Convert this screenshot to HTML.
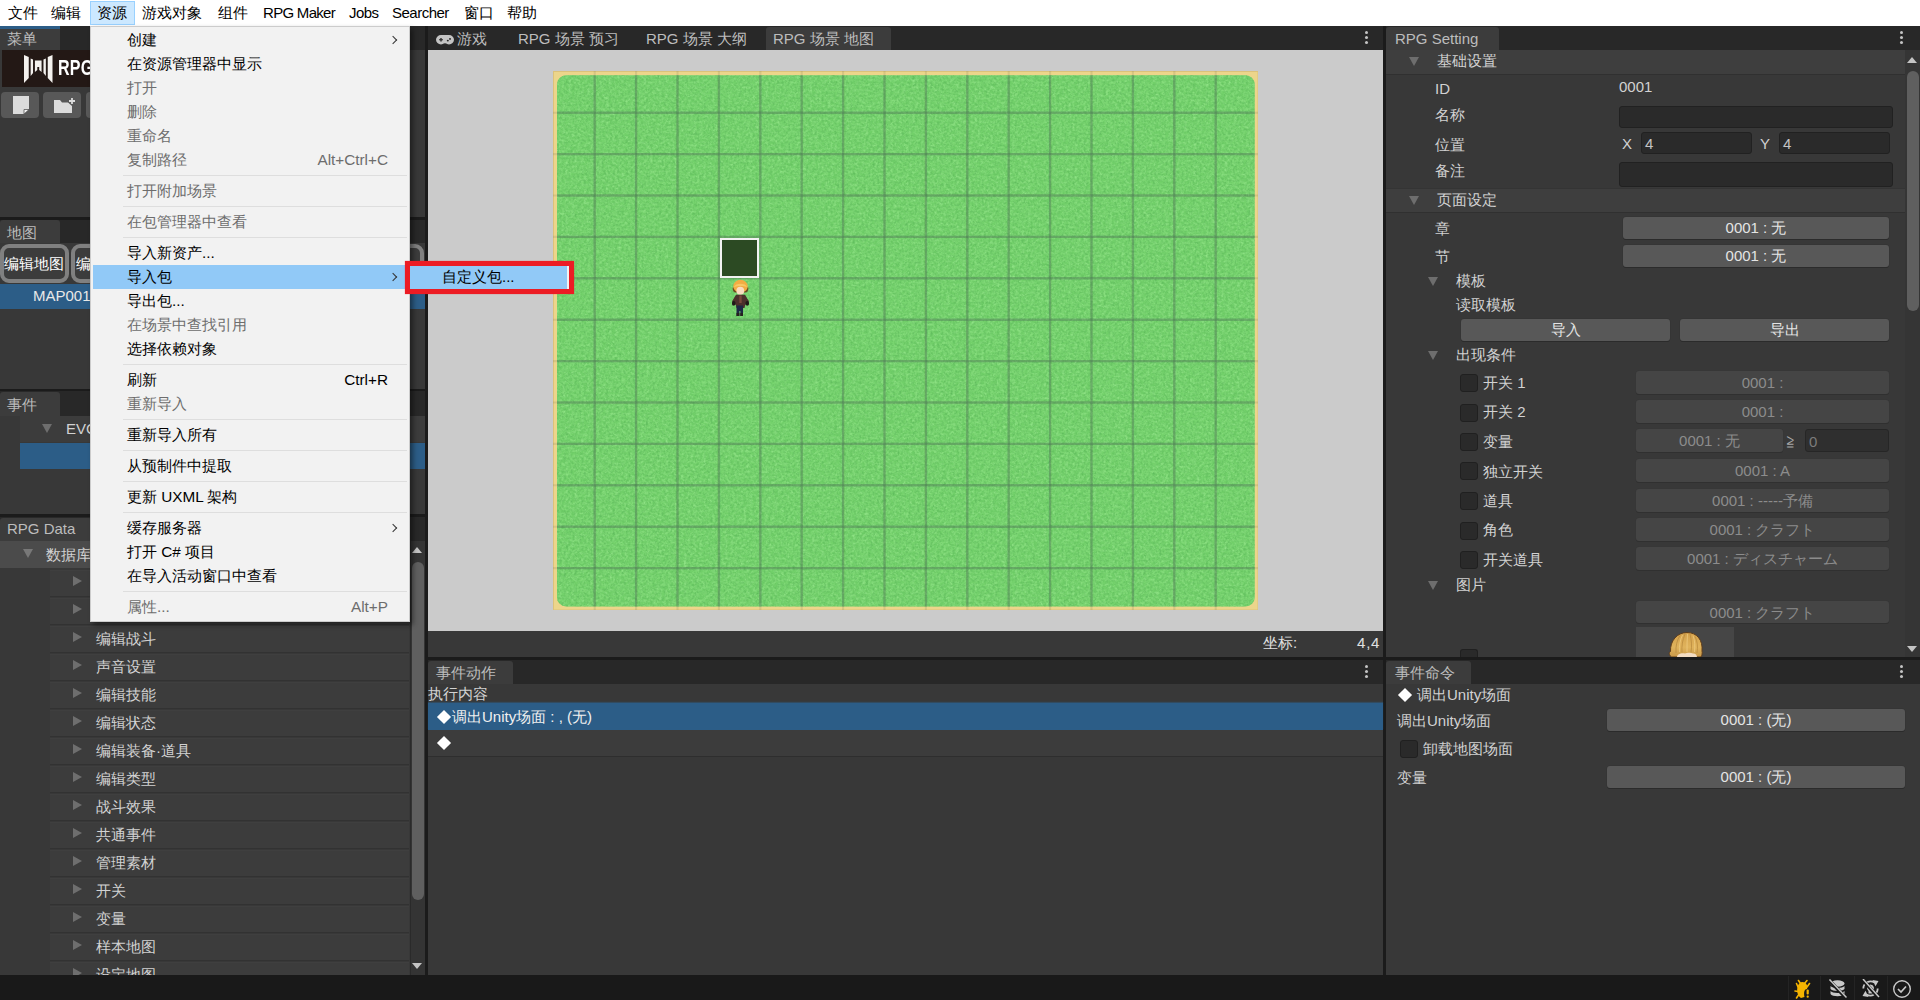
<!DOCTYPE html>
<html lang="zh">
<head>
<meta charset="utf-8">
<title>RPG Maker Unite</title>
<style>
*{box-sizing:border-box;margin:0;padding:0}
html,body{width:1920px;height:1000px;overflow:hidden;background:#383838}
body{font-family:"Liberation Sans",sans-serif;font-size:15px;color:#d2d2d2;position:relative;line-height:1}
.a{position:absolute}
.t{position:absolute;white-space:nowrap;line-height:20px;height:20px}
/* menubar */
#mbar{left:0;top:0;width:1920px;height:26px;background:#fff}
#mbar .t{color:#000;top:3px;font-size:15.400px}
#mbar .l{font-size:15px}
#mact{left:90px;top:1px;width:45px;height:24px;background:#cce8ff;border:1px solid #99d1ff}
/* unity generic */
.strip{background:#282828}
.tab{background:#3c3c3c;border-radius:3px 3px 0 0}
.tabt{color:#bdbdbd}
.split{background:#1b1b1b}
.sel{background:#2c5d87}
.fld{background:#2a2a2a;border:1px solid #212121;border-radius:3px}
.btn{background:#585858;border-radius:3px;box-shadow:0 1px 0 #2b2b2b,0 0 0 0.5px #333;color:#e4e4e4;text-align:center;line-height:22px}
.btnd{background:#454545;border-radius:3px;box-shadow:0 1px 0 #303030,0 0 0 0.5px #363636;color:#8c8c8c;text-align:center;line-height:23px}
.chk{background:#2a2a2a;border:1px solid #202020;border-radius:3px;width:18px;height:18px}
.tri-d{width:0;height:0;border-left:5px solid transparent;border-right:5px solid transparent;border-top:9px solid #6e6e6e}
.tri-r{width:0;height:0;border-top:5px solid transparent;border-bottom:5px solid transparent;border-left:9px solid #6e6e6e}
.row{background:#3c3c3c;left:50px;width:359px;height:27px;border-bottom:1px solid #323232;border-top:1px solid #3f3f3f}
.kebab{width:3px;height:3px;border-radius:50%;background:#c4c4c4;box-shadow:0 5px 0 #c4c4c4,0 10px 0 #c4c4c4}
.mb{top:244px;width:69px;height:39px;border:4px solid #808080;border-radius:9px;background:#3c3c3c}
/* windows menu */
#menu{left:90px;top:26px;width:320px;height:596px;background:#f2f2f2;border:1px solid #ccc;box-shadow:3px 3px 5px rgba(0,0,0,.45)}
#menu .t{color:#000;left:36px;font-size:15.300px}
#menu .d{color:#6d6d6d}
#menu .k{left:auto;right:21px}
#menu .sep{position:absolute;left:32px;right:2px;height:1px;background:#dedede}
.chev{position:absolute;width:6px;height:6px;border-top:1.5px solid #333;border-right:1.5px solid #333;transform:rotate(45deg)}
</style>
</head>
<body>

<!-- ===== base panels ===== -->
<div class="a" style="left:0;top:26px;width:1920px;height:949px;background:#383838"></div>
<!-- vertical splitters -->
<div class="a split" style="left:425px;top:26px;width:3px;height:949px"></div>
<div class="a split" style="left:1383px;top:26px;width:3px;height:949px"></div>
<!-- status bar -->
<div class="a" style="left:0;top:975px;width:1920px;height:25px;background:#191919"></div>

<!-- ===== LEFT COLUMN ===== -->
<div id="left">
<!-- menu panel -->
<div class="a strip" style="left:0;top:26px;width:425px;height:24px"></div>
<div class="a tab" style="left:0;top:26px;width:60px;height:24px;border-top:3px solid #2c5d87;border-radius:0"></div>
<div class="t tabt" style="left:7px;top:29px">菜单</div>
<div class="a" style="left:2px;top:50px;width:406px;height:37px;background:#231815"></div>
<!-- logo -->
<svg class="a" style="left:24px;top:55px" width="28.500" height="28" viewBox="0 0 30 28" preserveAspectRatio="none">
<path d="M0 0 L5 2 L5 23 L0 28 Z M7 3.5 L9.5 4.5 L9.5 18 L7 21 Z M11.5 5.5 L18.5 5.5 L18.5 17 L16 15 L16 12 L14 12 L14 15 L11.5 17 Z M20.5 4.5 L23 3.5 L23 21 L20.5 18 Z M25 2 L30 0 L30 28 L25 23 Z" fill="#f4f1ee"/>
</svg>
<div class="t" style="left:58px;top:56px;font-size:22px;font-weight:bold;color:#fff;line-height:24px;height:24px;transform:scaleX(0.73);transform-origin:left center;letter-spacing:0.3px">RPG MAKER</div>
<!-- tool buttons -->
<div class="a" style="left:1px;top:92px;width:38px;height:26px;background:#585858;border-radius:4px"></div>
<div class="a" style="left:43px;top:92px;width:38px;height:26px;background:#585858;border-radius:4px"></div>
<div class="a" style="left:86px;top:92px;width:38px;height:26px;background:#585858;border-radius:4px"></div>
<svg class="a" style="left:13px;top:96px" width="17" height="19" viewBox="0 0 17 19"><path d="M0 0H16V13L11 18H0Z" fill="#dcdcdc"/><path d="M11 18V13.5H16Z" fill="#f4f4f4" stroke="#585858" stroke-width="0.8"/></svg>
<svg class="a" style="left:54px;top:98px" width="22" height="16" viewBox="0 0 22 16"><path d="M0 2H6L8 4.5H14L18 8V15H0Z" fill="#dcdcdc"/><path d="M18 0V6M15 3H21" stroke="#dcdcdc" stroke-width="1.8"/></svg>

<!-- map panel -->
<div class="a split" style="left:0;top:217px;width:425px;height:3px"></div>
<div class="a strip" style="left:0;top:220px;width:425px;height:23px"></div>
<div class="a tab" style="left:0;top:220px;width:60px;height:23px"></div>
<div class="t tabt" style="left:7px;top:223px">地图</div>
<div class="a" style="left:0;top:243px;width:425px;height:41px;background:#383838"></div>
<div class="a mb" style="left:0"></div><div class="t" style="left:4px;top:254px;color:#fff;font-size:14.700px">编辑地图</div>
<div class="a mb" style="left:71px"></div><div class="t" style="left:76px;top:254px;color:#fff;font-size:14.700px">编辑</div>
<div class="a mb" style="left:355px"></div>
<div class="a sel" style="left:0;top:284px;width:425px;height:25px"></div>
<div class="t" style="left:33px;top:286px;color:#e8e8e8">MAP001</div>

<!-- event panel -->
<div class="a split" style="left:0;top:389px;width:425px;height:3px"></div>
<div class="a strip" style="left:0;top:391px;width:425px;height:25px"></div>
<div class="a tab" style="left:0;top:392px;width:60px;height:24px"></div>
<div class="t tabt" style="left:7px;top:395px">事件</div>
<div class="a" style="left:20px;top:416px;width:405px;height:26px;background:#3c3c3c"></div>
<div class="a tri-d" style="left:42px;top:424px"></div>
<div class="t" style="left:66px;top:419px">EVC</div>
<div class="a sel" style="left:20px;top:443px;width:405px;height:26px"></div>

<!-- rpg data panel -->
<div class="a split" style="left:0;top:514px;width:425px;height:3px"></div>
<div class="a strip" style="left:0;top:517px;width:425px;height:24px"></div>
<div class="a tab" style="left:0;top:518px;width:92px;height:23px"></div>
<div class="t tabt" style="left:7px;top:519px">RPG Data</div>
<div class="a" style="left:0;top:541px;width:410px;height:27px;background:#4b4b4b"></div>
<div class="a tri-d" style="left:23px;top:549px;border-top-color:#787878"></div>
<div class="t" style="left:46px;top:545px">数据库</div>
<div class="a row" style="top:570px"></div><div class="a tri-r" style="left:73px;top:576px"></div>
<div class="a row" style="top:598px"></div><div class="a tri-r" style="left:73px;top:604px"></div>
<div class="a row" style="top:626px"></div><div class="a tri-r" style="left:73px;top:632px"></div><div class="t" style="left:96px;top:629px">编辑战斗</div>
<div class="a row" style="top:654px"></div><div class="a tri-r" style="left:73px;top:660px"></div><div class="t" style="left:96px;top:657px">声音设置</div>
<div class="a row" style="top:682px"></div><div class="a tri-r" style="left:73px;top:688px"></div><div class="t" style="left:96px;top:685px">编辑技能</div>
<div class="a row" style="top:710px"></div><div class="a tri-r" style="left:73px;top:716px"></div><div class="t" style="left:96px;top:713px">编辑状态</div>
<div class="a row" style="top:738px"></div><div class="a tri-r" style="left:73px;top:744px"></div><div class="t" style="left:96px;top:741px">编辑装备·道具</div>
<div class="a row" style="top:766px"></div><div class="a tri-r" style="left:73px;top:772px"></div><div class="t" style="left:96px;top:769px">编辑类型</div>
<div class="a row" style="top:794px"></div><div class="a tri-r" style="left:73px;top:800px"></div><div class="t" style="left:96px;top:797px">战斗效果</div>
<div class="a row" style="top:822px"></div><div class="a tri-r" style="left:73px;top:828px"></div><div class="t" style="left:96px;top:825px">共通事件</div>
<div class="a row" style="top:850px"></div><div class="a tri-r" style="left:73px;top:856px"></div><div class="t" style="left:96px;top:853px">管理素材</div>
<div class="a row" style="top:878px"></div><div class="a tri-r" style="left:73px;top:884px"></div><div class="t" style="left:96px;top:881px">开关</div>
<div class="a row" style="top:906px"></div><div class="a tri-r" style="left:73px;top:912px"></div><div class="t" style="left:96px;top:909px">变量</div>
<div class="a row" style="top:934px"></div><div class="a tri-r" style="left:73px;top:940px"></div><div class="t" style="left:96px;top:937px">样本地图</div>
<div class="a row" style="top:962px"></div><div class="a tri-r" style="left:73px;top:968px"></div><div class="t" style="left:96px;top:965px">设定地图</div>

<!-- scrollbar -->
<div class="a" style="left:410px;top:541px;width:15px;height:434px;background:#343434;border-left:1px solid #2a2a2a"></div>
<div class="a" style="left:412px;top:547px;width:0;height:0;border-left:5px solid transparent;border-right:5px solid transparent;border-bottom:6px solid #c4c4c4"></div>
<div class="a" style="left:412px;top:963px;width:0;height:0;border-left:5px solid transparent;border-right:5px solid transparent;border-top:6px solid #c4c4c4"></div>
<div class="a" style="left:412px;top:562px;width:12px;height:338px;background:#5f5f5f;border-radius:6px"></div>
</div>


<!-- ===== CENTER COLUMN ===== -->
<div id="center">
<div class="a strip" style="left:428px;top:26px;width:955px;height:24px"></div>
<div class="a tab" style="left:766px;top:27px;width:125px;height:23px"></div>
<svg class="a" style="left:436px;top:35px" width="18" height="9.500" viewBox="0 0 18 11" preserveAspectRatio="none"><path d="M5 0H13A5 5.5 0 0 1 13 11C11.5 11 11 9.5 9 9.5C7 9.5 6.5 11 5 11A5 5.500 0 0 1 5 0Z" fill="#c4c4c4"/><path d="M3 5.500H7M5 3.500V7.500" stroke="#282828" stroke-width="1.4"/><circle cx="11.800" cy="6.500" r="1" fill="#282828"/><circle cx="14" cy="4.500" r="1" fill="#282828"/></svg>
<div class="t tabt" style="left:457px;top:29px">游戏</div>
<div class="t tabt" style="left:518px;top:29px">RPG 场景 预习</div>
<div class="t tabt" style="left:646px;top:29px">RPG 场景 大纲</div>
<div class="t tabt" style="left:773px;top:29px">RPG 场景 地图</div>
<div class="a kebab" style="left:1365px;top:31px"></div>
<!-- scene view -->
<div class="a" style="left:428px;top:50px;width:955px;height:581px;background:#cbcbcb"></div>
<svg class="a" style="left:552.500px;top:70.500px" width="705.5" height="539.5" viewBox="0 0 705.5 539.5">
<defs>
<filter id="gn" x="0" y="0" width="100%" height="100%" color-interpolation-filters="sRGB"><feTurbulence type="fractalNoise" baseFrequency="0.32 0.38" numOctaves="3" seed="7" result="n"/><feColorMatrix in="n" type="matrix" values="0 0 0 0 0.58  0 0 0 0 0.90  0 0 0 0 0.54  1.1 1.1 0 0 -0.86"/><feComposite operator="in" in2="SourceGraphic"/></filter>
<filter id="gd" x="0" y="0" width="100%" height="100%" color-interpolation-filters="sRGB"><feTurbulence type="fractalNoise" baseFrequency="0.45" numOctaves="2" seed="21" result="n"/><feColorMatrix in="n" type="matrix" values="0 0 0 0 0.34  0 0 0 0 0.70  0 0 0 0 0.34  0 0.9 0.9 0 -0.78"/><feComposite operator="in" in2="SourceGraphic"/></filter>
<filter id="bl" x="-5%" y="-5%" width="110%" height="110%"><feGaussianBlur stdDeviation="0.55"/></filter>
<filter id="bl2" x="-5%" y="-5%" width="110%" height="110%"><feGaussianBlur stdDeviation="0.6"/></filter>
</defs>
<rect x="0" y="0" width="705.5" height="539.5" fill="#ecd58b"/>
<rect x="0.500" y="0.500" width="704.5" height="538.5" fill="none" stroke="#dcc27a" stroke-width="1"/>
<g filter="url(#bl)">
<rect x="4" y="4.300" width="697.7" height="531.2" rx="9" ry="9" fill="#72d06b"/>
</g>
<rect x="4" y="4.300" width="697.7" height="531.2" rx="9" ry="9" fill="#fff" filter="url(#gn)"/>
<rect x="4" y="4.300" width="697.7" height="531.2" rx="9" ry="9" fill="#fff" filter="url(#gd)"/>
<clipPath id="gc"><rect x="4" y="4.300" width="697.7" height="531.2" rx="9" ry="9"/></clipPath>
<g stroke="#6b6b4a" stroke-opacity="0.16" stroke-width="2.100" filter="url(#bl)">
<line x1="41.7" y1="0" x2="41.7" y2="539.5"/><line x1="83.1" y1="0" x2="83.1" y2="539.5"/><line x1="124.5" y1="0" x2="124.5" y2="539.5"/><line x1="165.9" y1="0" x2="165.9" y2="539.5"/><line x1="207.3" y1="0" x2="207.3" y2="539.5"/><line x1="248.7" y1="0" x2="248.7" y2="539.5"/><line x1="290.1" y1="0" x2="290.1" y2="539.5"/><line x1="331.5" y1="0" x2="331.5" y2="539.5"/><line x1="372.9" y1="0" x2="372.9" y2="539.5"/><line x1="414.3" y1="0" x2="414.3" y2="539.5"/><line x1="455.7" y1="0" x2="455.7" y2="539.5"/><line x1="497.1" y1="0" x2="497.1" y2="539.5"/><line x1="538.5" y1="0" x2="538.5" y2="539.5"/><line x1="579.9" y1="0" x2="579.9" y2="539.5"/><line x1="621.3" y1="0" x2="621.3" y2="539.5"/><line x1="662.7" y1="0" x2="662.7" y2="539.5"/><line x1="0" y1="41.7" x2="705.5" y2="41.7"/><line x1="0" y1="83.1" x2="705.5" y2="83.1"/><line x1="0" y1="124.5" x2="705.5" y2="124.5"/><line x1="0" y1="165.9" x2="705.5" y2="165.9"/><line x1="0" y1="207.3" x2="705.5" y2="207.3"/><line x1="0" y1="248.7" x2="705.5" y2="248.7"/><line x1="0" y1="290.1" x2="705.5" y2="290.1"/><line x1="0" y1="331.5" x2="705.5" y2="331.5"/><line x1="0" y1="372.9" x2="705.5" y2="372.9"/><line x1="0" y1="414.3" x2="705.5" y2="414.3"/><line x1="0" y1="455.7" x2="705.5" y2="455.7"/><line x1="0" y1="497.1" x2="705.5" y2="497.1"/>
</g>
<g clip-path="url(#gc)"><g stroke="#4a7d5a" stroke-opacity="0.36" stroke-width="2.400" filter="url(#bl2)">
<line x1="41.7" y1="0" x2="41.7" y2="539.5"/><line x1="83.1" y1="0" x2="83.1" y2="539.5"/><line x1="124.5" y1="0" x2="124.5" y2="539.5"/><line x1="165.9" y1="0" x2="165.9" y2="539.5"/><line x1="207.3" y1="0" x2="207.3" y2="539.5"/><line x1="248.7" y1="0" x2="248.7" y2="539.5"/><line x1="290.1" y1="0" x2="290.1" y2="539.5"/><line x1="331.5" y1="0" x2="331.5" y2="539.5"/><line x1="372.9" y1="0" x2="372.9" y2="539.5"/><line x1="414.3" y1="0" x2="414.3" y2="539.5"/><line x1="455.7" y1="0" x2="455.7" y2="539.5"/><line x1="497.1" y1="0" x2="497.1" y2="539.5"/><line x1="538.5" y1="0" x2="538.5" y2="539.5"/><line x1="579.9" y1="0" x2="579.9" y2="539.5"/><line x1="621.3" y1="0" x2="621.3" y2="539.5"/><line x1="662.7" y1="0" x2="662.7" y2="539.5"/><line x1="0" y1="41.7" x2="705.5" y2="41.7"/><line x1="0" y1="83.1" x2="705.5" y2="83.1"/><line x1="0" y1="124.5" x2="705.5" y2="124.5"/><line x1="0" y1="165.9" x2="705.5" y2="165.9"/><line x1="0" y1="207.3" x2="705.5" y2="207.3"/><line x1="0" y1="248.7" x2="705.5" y2="248.7"/><line x1="0" y1="290.1" x2="705.5" y2="290.1"/><line x1="0" y1="331.5" x2="705.5" y2="331.5"/><line x1="0" y1="372.9" x2="705.5" y2="372.9"/><line x1="0" y1="414.3" x2="705.5" y2="414.3"/><line x1="0" y1="455.7" x2="705.5" y2="455.7"/><line x1="0" y1="497.1" x2="705.5" y2="497.1"/>
</g></g>
</svg>
<!-- selected cell -->
<div class="a" style="left:720px;top:237.500px;width:39px;height:40px;background:#2c4a23;border:2.500px solid #f2f2f2"></div>
<!-- character -->
<svg class="a" style="left:731px;top:279px" width="19" height="38" viewBox="0 0 19 38">
<path d="M1.600 8.500C1.600 13 3.500 13.500 4.500 13.500L14.500 13.500C15.500 13.500 17.400 13 17.400 8.500Z" fill="#6b4a22"/>
<ellipse cx="9.500" cy="7.200" rx="7.200" ry="6.400" fill="#f3ad43"/>
<ellipse cx="9.300" cy="11.800" rx="3.900" ry="4" fill="#f8dcc0"/>
<path d="M3 8C4 3.500 15 3.500 16 8C13 6.500 6 6.500 3 8Z" fill="#f8c765"/>
<path d="M5 15.800H14L17.800 22L16.500 26.500L14.300 25.500L13.500 29H5.500L4.700 25.500L2.500 26.500L1.200 22Z" fill="#4b302c"/>
<rect x="1" y="22" width="3.400" height="4.600" rx="1.600" fill="#1e1a18"/><rect x="14.600" y="22" width="3.400" height="4.600" rx="1.600" fill="#1e1a18"/>
<path d="M8.300 16.500H10.700V24H8.300Z" fill="#7a4a3c"/>
<path d="M5.500 26.500H12V37H9.400V32H8.400V37H5.500Z" fill="#1d2944"/>
<rect x="5.500" y="34" width="2.800" height="3" fill="#26211e"/><rect x="9.300" y="34" width="2.700" height="3" fill="#26211e"/>
</svg>
<!-- coord bar -->
<div class="a" style="left:428px;top:631px;width:955px;height:26px;background:#383838"></div>
<div class="t" style="left:1263px;top:633px;color:#e0e0e0">坐标:</div>
<div class="t" style="left:1357px;top:633px;color:#e0e0e0;letter-spacing:0.8px">4,4</div>
<!-- event action panel -->
<div class="a split" style="left:425px;top:657px;width:1495px;height:3px"></div>
<div class="a strip" style="left:428px;top:660px;width:955px;height:24px"></div>
<div class="a tab" style="left:428px;top:661px;width:85px;height:23px"></div>
<div class="t tabt" style="left:436px;top:663px">事件动作</div>
<div class="a kebab" style="left:1365px;top:665px"></div>
<div class="t" style="left:428px;top:684px">执行内容</div>
<div class="a sel" style="left:428px;top:703px;width:955px;height:27px;box-shadow:0 -1px 1px rgba(44,93,135,.5)"></div>
<div class="a" style="left:439px;top:712px;width:10px;height:10px;background:#fff;transform:rotate(45deg)"></div>
<div class="t" style="left:452px;top:707px;color:#f0f0f0">调出Unity场面 : , (无)</div>
<div class="a" style="left:428px;top:730px;width:955px;height:27px;background:#3c3c3c;border-bottom:1px solid #2e2e2e"></div>
<div class="a" style="left:439px;top:738px;width:10px;height:10px;background:#fff;transform:rotate(45deg)"></div>
</div>


<!-- ===== RIGHT COLUMN ===== -->
<div id="right">
<div class="a strip" style="left:1386px;top:26px;width:534px;height:24px"></div>
<div class="a tab" style="left:1386px;top:27px;width:113px;height:23px"></div>
<div class="t tabt" style="left:1395px;top:29px">RPG Setting</div>
<div class="a kebab" style="left:1900px;top:31px"></div>
<!-- header 1 -->
<div class="a" style="left:1386px;top:50px;width:519px;height:25px;background:#3e3e3e;border-bottom:1px solid #303030"></div>
<div class="a tri-d" style="left:1409px;top:57px"></div>
<div class="t" style="left:1437px;top:51px">基础设置</div>
<div class="t" style="left:1435px;top:79px">ID</div>
<div class="t" style="left:1619px;top:77px">0001</div>
<div class="t" style="left:1435px;top:105px">名称</div>
<div class="a fld" style="left:1619px;top:106px;width:274px;height:22px"></div>
<div class="t" style="left:1435px;top:135px">位置</div>
<div class="t" style="left:1622px;top:134px">X</div>
<div class="a fld" style="left:1641px;top:132px;width:111px;height:22px"></div>
<div class="t" style="left:1645px;top:134px;color:#c4c4c4">4</div>
<div class="t" style="left:1760px;top:134px">Y</div>
<div class="a fld" style="left:1779px;top:132px;width:111px;height:22px"></div>
<div class="t" style="left:1783px;top:134px;color:#c4c4c4">4</div>
<div class="t" style="left:1435px;top:161px">备注</div>
<div class="a fld" style="left:1619px;top:162px;width:274px;height:25px"></div>
<!-- header 2 -->
<div class="a" style="left:1386px;top:188px;width:519px;height:25px;background:#3e3e3e;border-bottom:1px solid #303030;border-top:1px solid #343434"></div>
<div class="a tri-d" style="left:1409px;top:196px"></div>
<div class="t" style="left:1437px;top:190px">页面设定</div>
<div class="t" style="left:1435px;top:219px">章</div>
<div class="a btn" style="left:1623px;top:217px;width:266px;height:22px">0001 : 无</div>
<div class="t" style="left:1435px;top:247px">节</div>
<div class="a btn" style="left:1623px;top:245px;width:266px;height:22px">0001 : 无</div>
<div class="a tri-d" style="left:1428px;top:277px"></div>
<div class="t" style="left:1456px;top:271px">模板</div>
<div class="t" style="left:1456px;top:295px">读取模板</div>
<div class="a btn" style="left:1461px;top:319px;width:209px;height:22px">导入</div>
<div class="a btn" style="left:1680px;top:319px;width:209px;height:22px">导出</div>
<div class="a tri-d" style="left:1428px;top:351px"></div>
<div class="t" style="left:1456px;top:345px">出现条件</div>
<div class="a chk" style="left:1460px;top:374px"></div><div class="t" style="left:1483px;top:373px">开关 1</div><div class="a btnd" style="left:1636px;top:371px;width:253px;height:23px">0001 :</div>
<div class="a chk" style="left:1460px;top:404px"></div><div class="t" style="left:1483px;top:402px">开关 2</div><div class="a btnd" style="left:1636px;top:400px;width:253px;height:23px">0001 :</div>
<div class="a chk" style="left:1460px;top:433px"></div><div class="t" style="left:1483px;top:432px">变量</div><div class="a btnd" style="left:1636px;top:429px;width:147px;height:23px">0001 : 无</div><div class="t" style="left:1786px;top:432px;color:#a8a8a8;font-size:17px">≧</div><div class="a fld" style="left:1805px;top:429px;width:84px;height:23px;background:#2f2f2f;border-color:#262626"></div><div class="t" style="left:1809px;top:432px;color:#7c7c7c">0</div>
<div class="a chk" style="left:1460px;top:462px"></div><div class="t" style="left:1483px;top:462px">独立开关</div><div class="a btnd" style="left:1636px;top:459px;width:253px;height:23px">0001 : A</div>
<div class="a chk" style="left:1460px;top:492px"></div><div class="t" style="left:1483px;top:491px">道具</div><div class="a btnd" style="left:1636px;top:489px;width:253px;height:23px">0001 : -----予備</div>
<div class="a chk" style="left:1460px;top:522px"></div><div class="t" style="left:1483px;top:520px">角色</div><div class="a btnd" style="left:1636px;top:518px;width:253px;height:23px">0001 : クラフト</div>
<div class="a chk" style="left:1460px;top:551px"></div><div class="t" style="left:1483px;top:550px">开关道具</div><div class="a btnd" style="left:1636px;top:547px;width:253px;height:23px">0001 : ディスチャーム</div>

<div class="a tri-d" style="left:1428px;top:581px"></div>
<div class="t" style="left:1456px;top:575px">图片</div>
<div class="a btnd" style="left:1636px;top:601px;width:253px;height:22px">0001 : クラフト</div>
<div class="a" style="left:1636px;top:627px;width:98px;height:30px;background:#464646"></div>
<svg class="a" style="left:1668px;top:631px" width="38" height="26" viewBox="0 0 38 26">
<defs><linearGradient id="hg" x1="0" y1="0" x2="0" y2="1"><stop offset="0" stop-color="#d3a04a"/><stop offset="0.6" stop-color="#e0b35c"/><stop offset="1" stop-color="#c99848"/></linearGradient></defs>
<path d="M3.500 26C1 24 0.500 21.500 2.500 20.500C2 10 9 1.500 19 1.500C29 1.500 35 9 34 20C34.500 22 34 24.500 33 26Z" fill="url(#hg)" stroke="#5e3d1c" stroke-width="1"/>
<path d="M9 26C9 23.500 13 21.500 17 22.500C19 21.500 23 21.500 25 22.500C27 22 29 24 29 26Z" fill="#f3dcc2"/>
<g fill="none" stroke="#b98a3f" stroke-width="0.800"><path d="M12 4.500C9 9 7.500 15 8 22"/><path d="M17 3C14.500 9 13.500 15 14 21.500"/><path d="M22 3C23.500 9 24 15 23 21.500"/><path d="M27 5.500C29.500 10 30 16 29 22"/></g>
<g fill="none" stroke="#f0cf85" stroke-width="0.700"><path d="M14.500 4C12 9 11 15 11.500 21"/><path d="M19.500 3C19 9 19 15 19 21"/><path d="M25 4.500C27 9.500 27 15 26.500 21"/></g>
</svg>
<div class="a chk" style="left:1460px;top:649px;height:8px;border-bottom:0;border-radius:3px 3px 0 0"></div>
<!-- scrollbar -->
<div class="a" style="left:1905px;top:50px;width:15px;height:607px;background:#353535"></div>
<div class="a" style="left:1907px;top:57px;width:0;height:0;border-left:5.500px solid transparent;border-right:5.500px solid transparent;border-bottom:6px solid #c4c4c4"></div>
<div class="a" style="left:1907px;top:646px;width:0;height:0;border-left:5.500px solid transparent;border-right:5.500px solid transparent;border-top:6px solid #c4c4c4"></div>
<div class="a" style="left:1907px;top:71px;width:12px;height:240px;background:#5f5f5f;border-radius:6px"></div>

<!-- event command panel -->
<div class="a strip" style="left:1386px;top:660px;width:534px;height:24px"></div>
<div class="a tab" style="left:1386px;top:661px;width:85px;height:23px"></div>
<div class="t tabt" style="left:1395px;top:663px">事件命令</div>
<div class="a kebab" style="left:1900px;top:665px"></div>
<div class="a" style="left:1399.500px;top:689.500px;width:10px;height:10px;background:#fff;transform:rotate(45deg)"></div>
<div class="t" style="left:1417px;top:685px">调出Unity场面</div>
<div class="t" style="left:1397px;top:711px">调出Unity场面</div>
<div class="a btn" style="left:1607px;top:709px;width:298px;height:22px">0001 : (无)</div>
<div class="a chk" style="left:1400px;top:740px"></div>
<div class="t" style="left:1423px;top:739px">卸载地图场面</div>
<div class="t" style="left:1397px;top:768px">变量</div>
<div class="a btn" style="left:1607px;top:766px;width:298px;height:22px">0001 : (无)</div>
</div>

<!-- ===== STATUS BAR (on top) ===== -->
<div class="a" style="left:0;top:975px;width:1920px;height:25px;background:#191919"></div>
<div class="a" style="left:1788px;top:976px;width:1px;height:24px;background:#242424"></div>
<div class="a" style="left:1820px;top:976px;width:1px;height:24px;background:#242424"></div>
<div class="a" style="left:1854px;top:976px;width:1px;height:24px;background:#242424"></div>
<div class="a" style="left:1887px;top:976px;width:1px;height:24px;background:#242424"></div>
<!-- bug -->
<svg class="a" style="left:1794px;top:979px" width="19" height="20" viewBox="0 0 19 20">
<g fill="none" stroke="#f5b400" stroke-width="1.6" stroke-linecap="round"><path d="M6.500 4.500L4.500 1.500M10.500 4.500L13 1.500M4 8L2.500 4.500M13 8L15.500 4.500M4 12.500L1 12M4.500 16L2.500 19"/></g>
<path d="M8.500 3C12.500 3 14 7 13 10C10.500 10 9.500 13 10.500 18L7 19C3.500 17 2.500 12 3.500 8C4.200 5 6 3 8.500 3Z" fill="#f5b400"/>
<rect x="12.600" y="10.500" width="2.200" height="5" rx="1" fill="#f5b400"/><rect x="12.600" y="16.600" width="2.200" height="2.200" rx="1" fill="#f5b400"/>
</svg>
<!-- db crossed -->
<svg class="a" style="left:1828px;top:979px" width="19" height="20" viewBox="0 0 19 20">
<g fill="#c8c8c8"><ellipse cx="9.500" cy="4.500" rx="7" ry="3.200"/><path d="M2.500 7C4 9.500 15 9.500 16.500 7V10C15 12.500 4 12.500 2.500 10Z"/><path d="M2.500 12C4 14.500 15 14.500 16.500 12V15C15 18 4 18 2.500 15Z"/></g>
<path d="M1 1L18 19" stroke="#191919" stroke-width="3.400"/><path d="M1.500 0.500L18.500 18.500" stroke="#c8c8c8" stroke-width="1.500"/>
</svg>
<!-- refresh crossed -->
<svg class="a" style="left:1861px;top:979px" width="19" height="20" viewBox="0 0 19 20">
<g fill="none" stroke="#c8c8c8" stroke-width="1.800"><path d="M2.300 9.500A7.200 7.200 0 0 1 13.500 3.600"/><path d="M16.700 9.500A7.200 7.200 0 0 1 5.500 15.400"/></g>
<path d="M11.500 1L17.500 2L14.500 7.300Z" fill="#c8c8c8"/><path d="M7.500 18L1.500 17L4.500 11.700Z" fill="#c8c8c8"/>
<path d="M9.500 5.500A3.600 3.600 0 0 1 11.500 12V14.500H7.500V12A3.600 3.600 0 0 1 9.500 5.500Z" fill="#c8c8c8"/>
<path d="M1.500 0.500L17.500 18.500" stroke="#191919" stroke-width="3.400"/><path d="M2 0L18 18" stroke="#c8c8c8" stroke-width="1.500"/>
</svg>
<!-- check -->
<svg class="a" style="left:1892px;top:979px" width="20" height="20" viewBox="0 0 20 20"><circle cx="10" cy="10" r="8.300" fill="none" stroke="#c8c8c8" stroke-width="1.400"/><path d="M6 10L9 13L14 7.500" fill="none" stroke="#c8c8c8" stroke-width="1.700"/></svg>


<!-- ===== WINDOWS MENU BAR + DROPDOWN ===== -->
<div class="a" id="mbar">
<div class="a" id="mact"></div>
<div class="t" style="left:8px">文件</div><div class="t" style="left:51px">编辑</div><div class="t" style="left:97px">资源</div>
<div class="t" style="left:142px">游戏对象</div><div class="t" style="left:218px">组件</div><div class="t l" style="left:263px;letter-spacing:-0.7px">RPG Maker</div>
<div class="t l" style="left:349px;letter-spacing:-0.6px">Jobs</div><div class="t l" style="left:392px;letter-spacing:-0.5px">Searcher</div><div class="t" style="left:464px">窗口</div><div class="t" style="left:507px">帮助</div>
</div>
<div class="a" id="menu">
<div class="t" style="top:3px">创建</div><div class="chev" style="left:298.500px;top:10px"></div>
<div class="t" style="top:27px">在资源管理器中显示</div>
<div class="t d" style="top:51px">打开</div>
<div class="t d" style="top:75px">删除</div>
<div class="t d" style="top:99px">重命名</div>
<div class="t d" style="top:123px">复制路径</div><div class="t d k" style="top:123px">Alt+Ctrl+C</div>
<div class="sep" style="top:148px"></div>
<div class="t d" style="top:154px">打开附加场景</div>
<div class="sep" style="top:179px"></div>
<div class="t d" style="top:185px">在包管理器中查看</div>
<div class="sep" style="top:210px"></div>
<div class="t" style="top:216px">导入新资产...</div>
<div class="a" style="left:2px;top:238px;width:314px;height:24px;background:#91c9f7"></div><div class="t" style="top:240px">导入包</div><div class="chev" style="left:298.500px;top:247px"></div>
<div class="t" style="top:264px">导出包...</div>
<div class="t d" style="top:288px">在场景中查找引用</div>
<div class="t" style="top:312px">选择依赖对象</div>
<div class="sep" style="top:337px"></div>
<div class="t" style="top:343px">刷新</div><div class="t k" style="top:343px">Ctrl+R</div>
<div class="t d" style="top:367px">重新导入</div>
<div class="sep" style="top:392px"></div>
<div class="t" style="top:398px">重新导入所有</div>
<div class="sep" style="top:423px"></div>
<div class="t" style="top:429px">从预制件中提取</div>
<div class="sep" style="top:454px"></div>
<div class="t" style="top:460px">更新 UXML 架构</div>
<div class="sep" style="top:485px"></div>
<div class="t" style="top:491px">缓存服务器</div><div class="chev" style="left:298.500px;top:498px"></div>
<div class="t" style="top:515px">打开 C# 项目</div>
<div class="t" style="top:539px">在导入活动窗口中查看</div>
<div class="sep" style="top:564px"></div>
<div class="t d" style="top:570px">属性...</div><div class="t d k" style="top:570px">Alt+P</div>
</div>
<!-- submenu w/ red annotation -->
<div class="a" style="left:405px;top:261px;width:169px;height:33px;background:#91c9f7;border:5px solid #ec1c24;box-shadow:0 0 1px rgba(236,28,36,.6)"></div>
<div class="a" style="left:567px;top:266px;width:2px;height:23px;background:#f2f2f2"></div>
<div class="t" style="left:442px;top:267px;color:#000">自定义包...</div>

<!-- SECTIONS -->
</body>
</html>
